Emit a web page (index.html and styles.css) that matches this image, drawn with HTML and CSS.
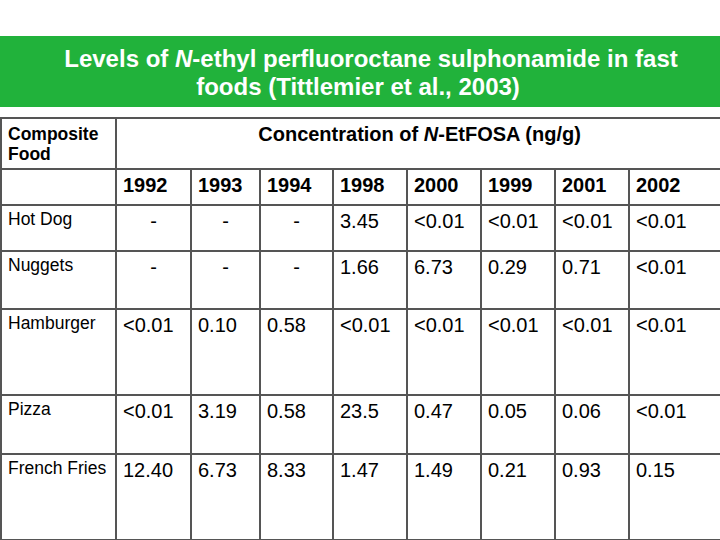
FILE: index.html
```html
<!DOCTYPE html>
<html>
<head>
<meta charset="utf-8">
<link rel="stylesheet" href="styles.css">
</head>
<body>
<div class="slide">
  <div class="title-band">
    <h1 class="title"><span class="t1">Levels of <i>N</i>-ethyl perfluoroctane sulphonamide in fast</span><br><span class="t2">foods (Tittlemier et al., 2003)</span></h1>
  </div>
  <table class="data">
    <colgroup>
      <col class="c-label">
      <col class="c-a"><col class="c-b"><col class="c-c"><col class="c-d">
      <col class="c-d"><col class="c-d"><col class="c-d"><col class="c-e">
    </colgroup>
    <thead>
      <tr class="r-head">
        <th class="label-head">Composite<br>Food</th>
        <th class="conc-head" colspan="8">Concentration of <i>N</i>-EtFOSA (ng/g)</th>
      </tr>
      <tr class="r-years">
        <th class="label-head"></th>
        <th class="year">1992</th><th class="year">1993</th><th class="year">1994</th><th class="year">1998</th>
        <th class="year">2000</th><th class="year">1999</th><th class="year">2001</th><th class="year">2002</th>
      </tr>
    </thead>
    <tbody>
      <tr class="r-1">
        <td class="label">Hot Dog</td>
        <td class="val dash">-</td><td class="val dash">-</td><td class="val dash">-</td>
        <td class="val">3.45</td><td class="val">&lt;0.01</td><td class="val">&lt;0.01</td><td class="val">&lt;0.01</td><td class="val">&lt;0.01</td>
      </tr>
      <tr class="r-2">
        <td class="label">Nuggets</td>
        <td class="val dash">-</td><td class="val dash">-</td><td class="val dash">-</td>
        <td class="val">1.66</td><td class="val">6.73</td><td class="val">0.29</td><td class="val">0.71</td><td class="val">&lt;0.01</td>
      </tr>
      <tr class="r-3">
        <td class="label">Hamburger</td>
        <td class="val">&lt;0.01</td><td class="val">0.10</td><td class="val">0.58</td>
        <td class="val">&lt;0.01</td><td class="val">&lt;0.01</td><td class="val">&lt;0.01</td><td class="val">&lt;0.01</td><td class="val">&lt;0.01</td>
      </tr>
      <tr class="r-4">
        <td class="label">Pizza</td>
        <td class="val">&lt;0.01</td><td class="val">3.19</td><td class="val">0.58</td>
        <td class="val">23.5</td><td class="val">0.47</td><td class="val">0.05</td><td class="val">0.06</td><td class="val">&lt;0.01</td>
      </tr>
      <tr class="r-5">
        <td class="label">French Fries</td>
        <td class="val">12.40</td><td class="val">6.73</td><td class="val">8.33</td>
        <td class="val">1.47</td><td class="val">1.49</td><td class="val">0.21</td><td class="val">0.93</td><td class="val">0.15</td>
      </tr>
    </tbody>
  </table>
</div>
</body>
</html>
```
FILE: styles.css
```css
html, body {
  margin: 0;
  padding: 0;
  background: #ffffff;
}

.slide {
  width: 720px;
  height: 540px;
  overflow: hidden;
  padding-top: 36px;
  box-sizing: border-box;
  font-family: "Liberation Sans", Arial, sans-serif;
  color: #000;
}

.title-band {
  background: #21b23b;
  height: 71px;
  box-sizing: border-box;
  padding: 9px 0 0 10px;
}

.title {
  margin: 0;
  color: #ffffff;
  font-size: 24px;
  line-height: 28px;
  font-weight: bold;
  text-align: center;
}

.title i {
  font-style: italic;
}

.t1 {
  margin-left: 12px;
}

.t2 {
  margin-right: 14px;
}

.data {
  margin-top: 10px;
  width: 720px;
  table-layout: fixed;
  border-collapse: collapse;
}

.c-label { width: 115px; }
.c-a { width: 75px; }
.c-b { width: 69px; }
.c-c { width: 73px; }
.c-d { width: 74px; }
.c-e { width: 92px; }

.data th,
.data td {
  border: 2px solid #555555;
  vertical-align: top;
  text-align: left;
  padding: 3px 4px 0 6px;
  overflow: hidden;
  white-space: nowrap;
}

.r-head { height: 51px; }
.r-years { height: 36px; }
.r-1 { height: 46px; }
.r-2 { height: 58px; }
.r-3 { height: 86px; }
.r-4 { height: 59px; }
.r-5 { height: 86px; }

.label-head {
  font-size: 17.5px;
  line-height: 20px;
  font-weight: bold;
  padding-top: 5px !important;
  padding-left: 6px;
}

.conc-head {
  font-size: 20px;
  font-weight: bold;
  text-align: center !important;
  padding-top: 4px !important;
}

.year {
  font-size: 20px;
  font-weight: bold;
  padding-top: 4px !important;
}

.label {
  font-size: 17.5px;
  padding-left: 6px !important;
  padding-top: 3px !important;
}

.val {
  font-size: 20px;
  padding-top: 4px !important;
}

.val.dash {
  text-align: center !important;
  padding-left: 4px !important;
}
```
